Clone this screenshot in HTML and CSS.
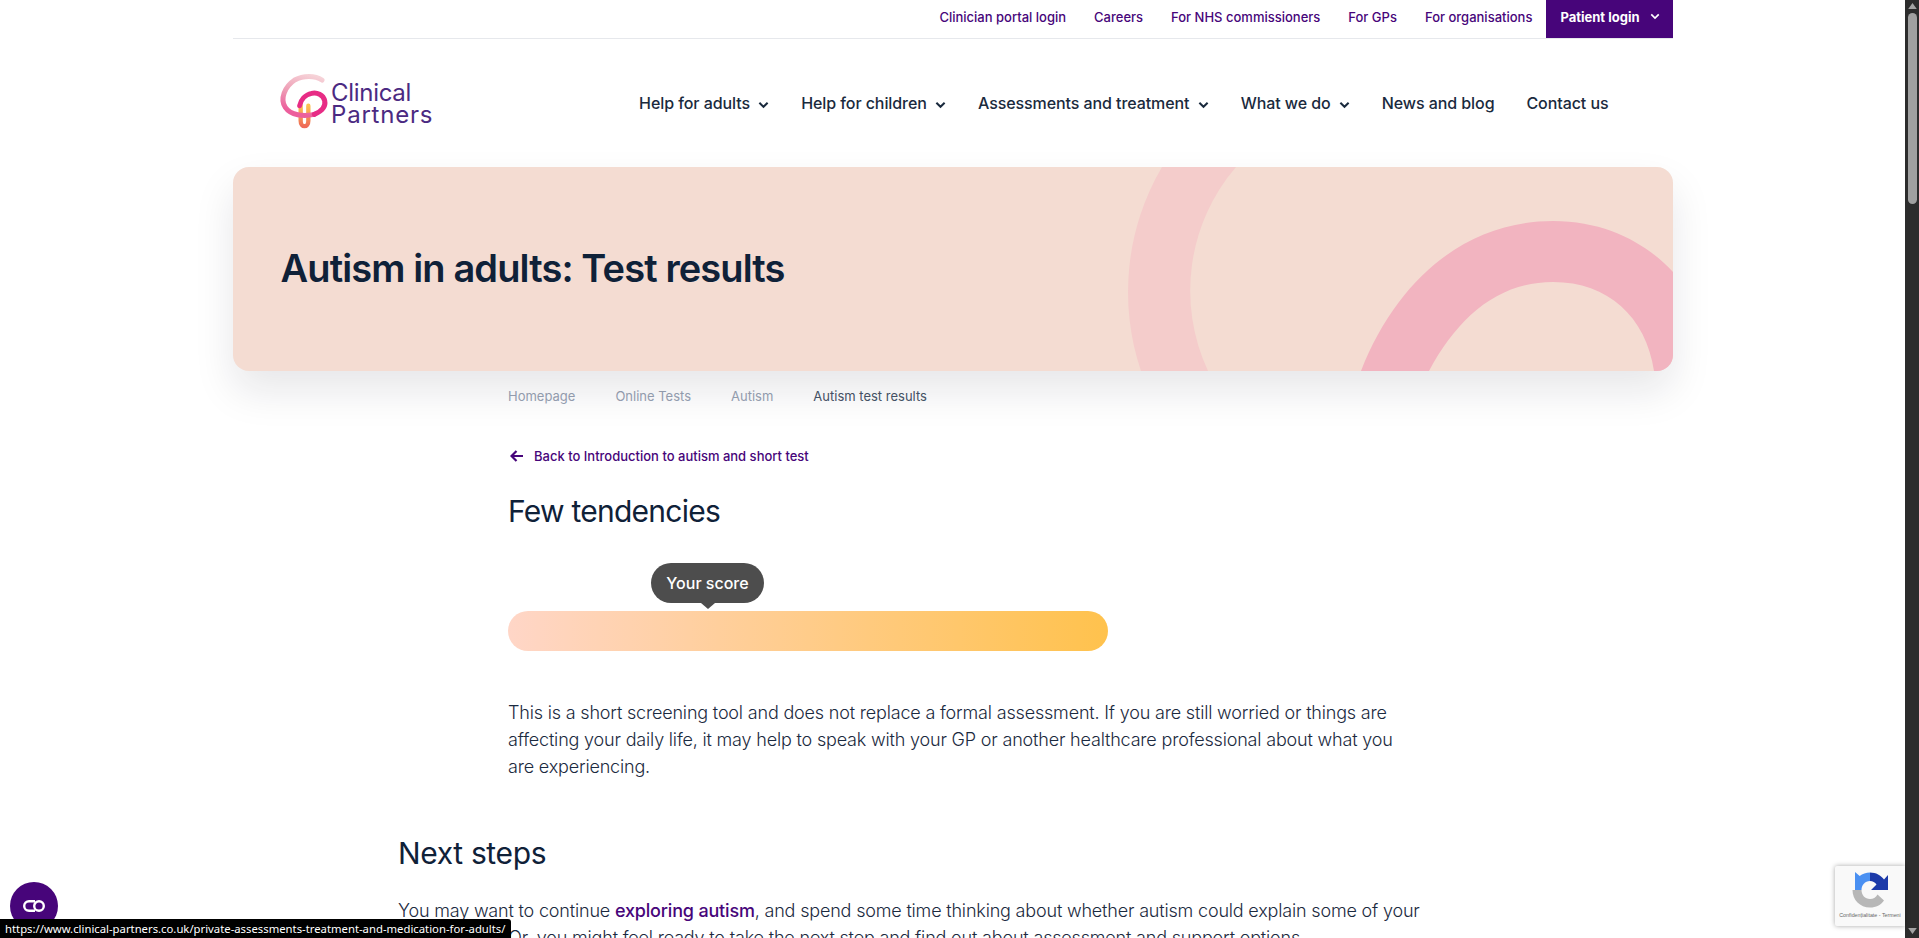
FILE: index.html
```html
<!DOCTYPE html>
<html lang="en">
<head>
<meta charset="utf-8">
<title>Autism in adults: Test results</title>
<link rel="stylesheet" href="styles.css">
</head>
<body>
<div class="shell">
  <div class="page">
    <div class="wrap">
      <div class="topbar">
        <a class="toplink">Clinician portal login</a>
        <a class="toplink">Careers</a>
        <a class="toplink">For NHS commissioners</a>
        <a class="toplink">For GPs</a>
        <a class="toplink">For organisations</a>
        <a class="patient">Patient login
          <svg class="chev chev-small" viewBox="0 0 12 8"><path d="M1.5 1.5 6 6l4.5-4.5"/></svg>
        </a>
      </div>
      <header class="mainnav">
        <div class="logo">
          <svg class="logo-mark" viewBox="0 0 144 171">
            <defs>
              <linearGradient id="lg-pale" x1="0.9" y1="0" x2="0.6" y2="1">
                <stop offset="0" stop-color="#f6d3d8"/>
                <stop offset="0.55" stop-color="#ee9db5"/>
                <stop offset="1" stop-color="#ec5f9c"/>
              </linearGradient>
              <linearGradient id="lg-low" x1="0" y1="0" x2="0" y2="1">
                <stop offset="0" stop-color="#fbc34f"/>
                <stop offset="1" stop-color="#ef6b58"/>
              </linearGradient>
            </defs>
            <path class="lm lm-low" d="M62 95V140C62 162 85 162 85 140V95"/>
            <path class="lm lm-pale" d="M126 18C105 4 70 4 44 18C14 38 -1 75 16 100C32 124 70 128 103 121"/>
            <path class="lm lm-mag" d="M103 121C125 112 138 98 134 80C130 62 110 54 95 58C75 62 62 78 59 95"/>
          </svg>
          <div class="logo-text"><span class="logo-l1">Clinical</span><span class="logo-l2">Partners</span></div>
        </div>
        <nav class="navlinks">
          <a class="navlink">Help for adults <svg class="chev" viewBox="0 0 12 8"><path d="M1.5 1.5 6 6l4.5-4.5"/></svg></a>
          <a class="navlink">Help for children <svg class="chev" viewBox="0 0 12 8"><path d="M1.5 1.5 6 6l4.5-4.5"/></svg></a>
          <a class="navlink">Assessments and treatment <svg class="chev" viewBox="0 0 12 8"><path d="M1.5 1.5 6 6l4.5-4.5"/></svg></a>
          <a class="navlink">What we do <svg class="chev" viewBox="0 0 12 8"><path d="M1.5 1.5 6 6l4.5-4.5"/></svg></a>
          <a class="navlink">News and blog</a>
          <a class="navlink">Contact us</a>
        </nav>
      </header>
      <section class="hero">
        <svg class="hero-art" viewBox="0 0 1440 204">
          <path class="arc-soft" d="M929 0A247 247 0 0 0 908 204H975A190 190 0 0 1 1003 0Z"/>
          <path class="arc-strong" d="M1128 204C1165 110 1235 54 1320 54C1375 54 1415 78 1440 105V204H1421C1413 150 1375 115 1320 115C1265 115 1225 150 1196 204Z"/>
        </svg>
        <h1 class="hero-title">Autism in adults: Test results</h1>
      </section>
      <div class="article">
        <div class="narrow">
          <div class="crumbs">
            <a class="crumb">Homepage</a>
            <a class="crumb">Online Tests</a>
            <a class="crumb">Autism</a>
            <span class="crumb crumb-current">Autism test results</span>
          </div>
          <a class="back">
            <svg class="back-icon" viewBox="0 0 14 12"><path d="M13 6H2M6.5 1 1.5 6l5 5"/></svg>
            Back to Introduction to autism and short test
          </a>
          <h2 class="result">Few tendencies</h2>
          <div class="meter">
            <div class="tip">Your score</div>
          </div>
          <p class="lead">This is a short screening tool and does not replace a formal assessment. If you are still worried or things are affecting your daily life, it may help to speak with your GP or another healthcare professional about what you are experiencing.</p>
        </div>
        <h2 class="next">Next steps</h2>
        <p class="body">You may want to continue <a class="inline">exploring autism</a>, and spend some time thinking about whether autism could explain some of your experiences. Or, you might feel ready to take the next step and find out about assessment and support options.</p>
      </div>
    </div>
  </div>
  <div class="scrollbar">
    <svg class="sb-arrow" viewBox="0 0 10 7"><path d="M5 0 10 7H0Z"/></svg>
    <div class="sb-thumb"></div>
    <svg class="sb-arrow sb-down" viewBox="0 0 10 7"><path d="M0 0H10L5 7Z"/></svg>
  </div>
  <a class="access">
    <svg class="access-icon" viewBox="0 0 24 14"><path d="M13 2.2H7a4.8 4.8 0 0 0 0 9.6h6"/><circle cx="17" cy="7" r="4.8"/></svg>
  </a>
  <div class="captcha">
    <svg class="captcha-logo" viewBox="0 0 36 36">
      <path class="cap-gray" d="M5 18H0.5C0.5 28 8 35.5 18 35.5C24 35.5 29 33 32 28.5L25.5 22.5C23.8 25.5 21.2 27 18 27C13 27 9.5 23 9.5 18Z"/>
      <path class="cap-blue" d="M0.5 18H9.5C9.5 13 13 9 18 9V0.5C14 0.5 10.5 1.8 7.7 4L3 0V18Z"/>
      <path class="cap-navy" d="M18 0.5C24 0.5 29 3.3 32 7.5L36 3V18H19L24.5 12.5C23 10.3 20.8 9 18 9Z"/>
    </svg>
    <div class="captcha-text">Confidențialitate - Termeni</div>
  </div>
  <div class="status">https://www.clinical-partners.co.uk/private-assessments-treatment-and-medication-for-adults/</div>
</div>
</body>
</html>
```
FILE: styles.css
```css
* { box-sizing: border-box; }
html, body { margin: 0; height: 100%; overflow: hidden; background: #fff; }
body { font-family: Inter, "Liberation Sans", sans-serif; color: #0f2138; }
a { color: inherit; text-decoration: none; }

.shell { position: relative; display: flex; width: 1919px; height: 938px; overflow: hidden; }
.page { flex: 1 1 auto; min-width: 0; overflow: hidden; }
.wrap { width: 1440px; margin: 0 auto; }

.topbar {
  display: flex; justify-content: flex-end; align-items: center; gap: 28px;
  height: 39px; padding-bottom: 5px; border-bottom: 1px solid #e6e8ec;
  font-size: 13px; font-weight: 500; color: #47057a;
}
.patient {
  display: flex; align-items: center; gap: 10px;
  height: 38px; margin-left: -14px; padding: 0 13px 5px 14px;
  background: #47057a; color: #fff; font-weight: 700; align-self: flex-start;
}
.chev { width: 11px; height: 8px; margin-left: 4px; fill: none; stroke: currentColor; stroke-width: 2.2; }
.chev-small { margin-left: 0; width: 10px; height: 7px; stroke-width: 2; }

.mainnav {
  display: flex; align-items: center; justify-content: space-between;
  height: 128px; padding: 0 64px 0 47.5px;
}
.logo { display: flex; align-items: center; gap: 3px; }
.logo-mark { width: 48px; height: 57px; margin-top: -1px; overflow: visible; }
.lm { fill: none; stroke-width: 15; stroke-linecap: round; stroke-linejoin: round; }
.lm-low { stroke: url(#lg-low); stroke-width: 13; }
.lm-pale { stroke: url(#lg-pale); }
.lm-mag { stroke: #e72c85; }
.logo-text {
  display: flex; flex-direction: column; margin-top: 2px;
  font-family: Inter, "Noto Sans", sans-serif; font-size: 24px; line-height: 22px; font-weight: 400; color: #4b2a82;
}
.logo-l1 { letter-spacing: -0.3px; }
.logo-l2 { letter-spacing: 0.8px; }
.navlinks { display: flex; align-items: center; gap: 32px; font-size: 16px; font-weight: 500; letter-spacing: -0.08px; color: #1a2a3d; }
.navlink { white-space: nowrap; }

.hero {
  position: relative; height: 204px; border-radius: 16px; overflow: hidden;
  background: #f4dcd2; box-shadow: 0 20px 40px rgba(16, 24, 40, .1);
}
.hero-art { position: absolute; inset: 0; width: 100%; height: 100%; }
.arc-soft { fill: #f4cccb; }
.arc-strong { fill: #f2b4c0; }
.hero-title {
  position: relative; margin: 0; padding: 77px 0 0 48px;
  font-size: 38px; line-height: 48px; font-weight: 600; letter-spacing: -0.88px; color: #0f2138;
}

.article { margin-left: 165.5px; width: 1030px; }
.narrow { padding-left: 110px; width: 1004px; }
.crumbs { display: flex; gap: 40px; padding-top: 16px; font-size: 13px; line-height: 18px; color: #98a2b3; }
.crumb-current { color: #475467; }
.back {
  display: flex; align-items: center; gap: 10px; margin-top: 42px;
  font-size: 13px; line-height: 18px; font-weight: 500; color: #47057a;
}
.back-icon { width: 14px; height: 12px; margin-left: 2px; fill: none; stroke: currentColor; stroke-width: 2.2; }
.result { margin: 26px 0 0; font-size: 30px; line-height: 40px; font-weight: 400; letter-spacing: -0.75px; color: #0f2138; }
.meter {
  position: relative; width: 600px; height: 40px; margin-top: 80px; border-radius: 20px;
  background: linear-gradient(90deg, #ffd6c7, #ffc24d);
}
.tip {
  position: absolute; left: 143px; top: -48px; width: 113px; height: 40px;
  display: flex; align-items: center; justify-content: center;
  border-radius: 20px; background: #4d4d4d; color: #fff; font-size: 16px; font-weight: 500;
}
.tip::after {
  content: ""; position: absolute; left: 50%; bottom: -6px; margin-left: -7px;
  border-left: 7px solid transparent; border-right: 7px solid transparent; border-top: 6px solid #4d4d4d;
}
.lead { margin: 48px 0 0; font-size: 18px; line-height: 27px; font-weight: 300; letter-spacing: -0.18px; color: #1b2a40; }
.next { margin: 53px 0 0; font-size: 30px; line-height: 40px; font-weight: 400; letter-spacing: -0.35px; color: #0f2138; }
.body { margin: 24px 0 0; font-size: 18px; line-height: 27px; font-weight: 300; letter-spacing: -0.18px; color: #1b2a40; }
.inline { color: #47057a; font-weight: 500; }

.scrollbar {
  position: relative; flex: 0 0 14px; height: 938px; background: #2c2c2c;
  display: flex; flex-direction: column; align-items: center;
}
.sb-arrow { width: 9px; height: 6px; margin-top: 3px; fill: #a3a3a3; flex: none; }
.sb-thumb { width: 9px; height: 191px; margin-top: 4px; border-radius: 5px; background: #a0a0a0; flex: none; }
.sb-down { margin-top: auto; margin-bottom: 4px; }

.access {
  position: absolute; left: 10px; top: 882px; width: 48px; height: 48px; border-radius: 50%;
  background: #47057a; display: flex; align-items: center; justify-content: center;
}
.access-icon { width: 24px; height: 14px; fill: none; stroke: #fff; stroke-width: 2.4; }

.captcha {
  position: absolute; left: 1835px; top: 866px; width: 70px; height: 60px;
  background: #f9f9f9; box-shadow: 0 0 5px rgba(0, 0, 0, .35); border-radius: 2px 0 0 2px;
  display: flex; flex-direction: column; align-items: center; padding-top: 6px;
}
.captcha-logo { width: 36px; height: 36px; flex: none; }
.cap-gray { fill: #b7b7b7; }
.cap-blue { fill: #4a90f2; }
.cap-navy { fill: #1c3aa9; }
.captcha-text { margin-top: 3px; font-family: "Liberation Sans", sans-serif; font-size: 5.3px; line-height: 8px; color: #666; white-space: nowrap; }

.status {
  position: absolute; left: 0; bottom: 0; height: 19px; padding: 0 6px 0 5px;
  background: #000; color: #fff; border-radius: 0 3px 0 0;
  font-family: "Noto Sans", "Open Sans", sans-serif; font-size: 11.3px; line-height: 19px; white-space: nowrap;
}
```
